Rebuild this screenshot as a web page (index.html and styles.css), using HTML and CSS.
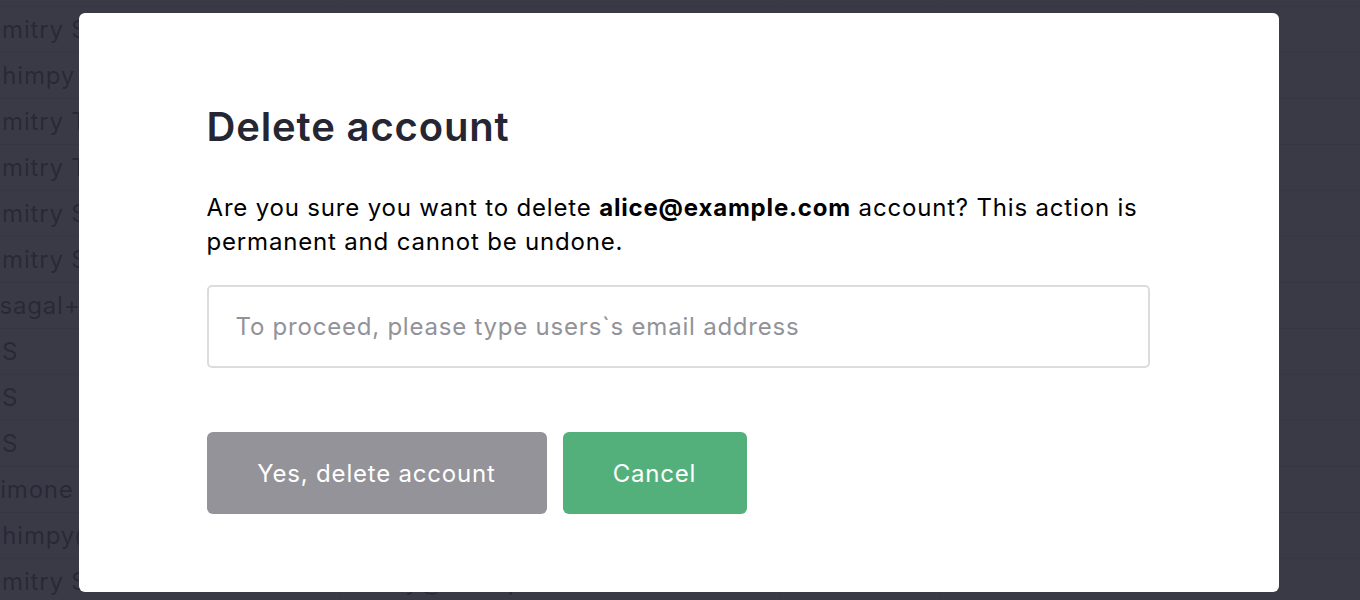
FILE: index.html
```html
<!DOCTYPE html>
<html lang="en">
<head>
<meta charset="utf-8">
<title>Delete account</title>
<link rel="stylesheet" href="styles.css">
</head>
<body>
<div class="page">
  <table class="users">
    <tbody>
      <tr><td>Dmitry S</td><td>dmitry@example.com</td><td></td><td></td><td></td><td></td></tr>
      <tr><td>Chimpy</td><td>chimpy@example.com</td><td></td><td></td><td></td><td></td></tr>
      <tr><td>Dmitry T</td><td>dmitry.t@example.com</td><td></td><td></td><td></td><td></td></tr>
      <tr><td>Dmitry T</td><td>dmitry.t2@example.com</td><td></td><td></td><td></td><td></td></tr>
      <tr><td>Dmitry S</td><td>dmitry.s@example.com</td><td></td><td></td><td></td><td></td></tr>
      <tr><td>Dmitry S</td><td>dmitry.s2@example.com</td><td></td><td></td><td></td><td></td></tr>
      <tr><td>dsagal+test</td><td>dsagal+test@example.com</td><td></td><td></td><td></td><td></td></tr>
      <tr><td>DS</td><td>s1@example.com</td><td></td><td></td><td></td><td></td></tr>
      <tr><td>DS</td><td>s2@example.com</td><td></td><td></td><td></td><td></td></tr>
      <tr><td>DS</td><td>s3@example.com</td><td></td><td></td><td></td><td></td></tr>
      <tr><td>Simone</td><td>simone@example.com</td><td></td><td></td><td></td><td></td></tr>
      <tr><td>Chimpy@</td><td>chimpy@example.com</td><td></td><td></td><td></td><td></td></tr>
      <tr><td>Dmitry S</td><td>dmitry@example.com</td><td></td><td></td><td></td><td></td></tr>
    </tbody>
  </table>
</div>

<div class="overlay">
  <div class="modal" role="dialog" aria-labelledby="modal-title">
    <h1 id="modal-title" class="modal-title">Delete account</h1>
    <p class="modal-text">Are you sure you want to delete <strong>alice@example.com</strong> account? This action is permanent and cannot be undone.</p>
    <input class="modal-input" type="text" placeholder="To proceed, please type users`s email address">
    <div class="modal-actions">
      <button class="btn btn-delete" type="button">Yes, delete account</button>
      <button class="btn btn-cancel" type="button">Cancel</button>
    </div>
  </div>
</div>
</body>
</html>
```

FILE: styles.css
```css
* { box-sizing: border-box; }

html, body {
  margin: 0;
  padding: 0;
  width: 1360px;
  height: 600px;
  overflow: hidden;
  font-family: "Inter", "Noto Sans", "Liberation Sans", sans-serif;
  background: #ffffff;
}

.page {
  margin-left: -18px;
  margin-top: 6px;
}

.users {
  border-collapse: collapse;
  font-size: 24px;
  letter-spacing: 0.8px;
  color: #10303a;
  table-layout: fixed;
  width: 1400px;
}

.users td {
  height: 46px;
  padding: 0 0 0 2px;
  border-top: 1px solid #d6d6d6;
  border-right: 1px solid #e2e2e2;
  white-space: nowrap;
  overflow: hidden;
  vertical-align: middle;
}

.users td:nth-child(1) { width: 358px; }
.users td:nth-child(2) { width: 439px; }
.users td:nth-child(3) { width: 161px; }
.users td:nth-child(4) { width: 198px; }
.users td:nth-child(5) { width: 222px; }

.overlay {
  position: fixed;
  inset: 0;
  background: rgba(41, 41, 54, 0.92);
  display: flex;
  justify-content: center;
  align-items: flex-start;
  padding-top: 13px;
  padding-left: 38px;
  padding-right: 41px;
}

.modal {
  width: 1200px;
  height: 579px;
  background: #ffffff;
  border-radius: 6px;
  padding: 90px 129px 77px 128px;
  display: flex;
  flex-direction: column;
}

.modal-title {
  margin: 0;
  font-size: 40px;
  line-height: 48px;
  font-weight: 600;
  color: #262633;
  letter-spacing: 0.85px;
}

.modal-text {
  margin: 40px 0 0;
  font-size: 24px;
  line-height: 34px;
  letter-spacing: 0.82px;
  color: #000000;
}

.modal-text strong {
  font-weight: 700;
}

.modal-input {
  margin-top: 26px;
  width: 943px;
  height: 83px;
  flex: none;
  border: 2px solid #dcdcdc;
  border-radius: 5px;
  padding: 0 27px;
  font-family: inherit;
  font-size: 24px;
  letter-spacing: 0.78px;
  color: #262633;
  background: #ffffff;
  outline: none;
}

.modal-input::placeholder {
  color: #929299;
}

.modal-actions {
  margin-top: 64px;
  display: flex;
  gap: 16px;
}

.btn {
  height: 82px;
  border: none;
  border-radius: 6px;
  font-family: inherit;
  font-size: 24px;
  letter-spacing: 0.8px;
  color: #ffffff;
  cursor: pointer;
}

.btn-delete {
  width: 340px;
  background: #949399;
}

.btn-cancel {
  width: 184px;
  background: #53b07b;
}
```
